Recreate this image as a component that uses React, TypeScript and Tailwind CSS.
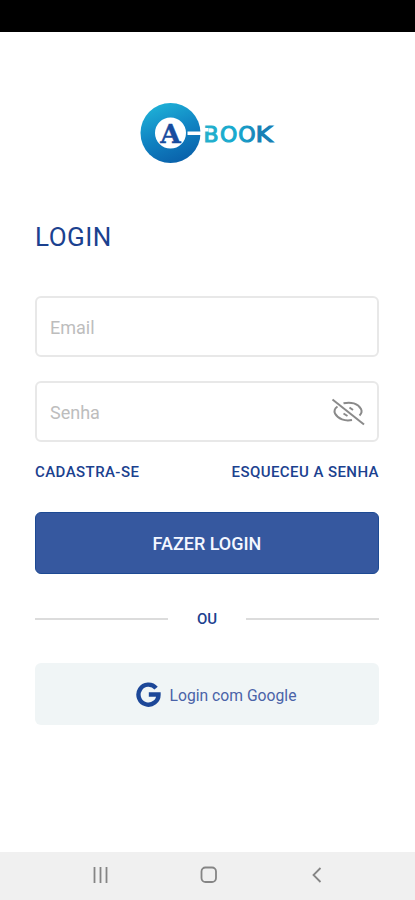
import { useState } from "react";

function Logo() {
  return (
    <svg width="136" height="62" viewBox="0 0 136 62" role="img" aria-label="A-Book" className="overflow-visible">
      <defs>
        <linearGradient id="ring" x1="0.2" y1="0" x2="0.6" y2="1">
          <stop offset="0" stopColor="#1fb4d8" />
          <stop offset="0.5" stopColor="#1186c4" />
          <stop offset="1" stopColor="#0a62ab" />
        </linearGradient>
        <linearGradient id="word" gradientUnits="userSpaceOnUse" x1="65" y1="0" x2="126" y2="0">
          <stop offset="0" stopColor="#22b0cc" />
          <stop offset="0.55" stopColor="#16a8ce" />
          <stop offset="1" stopColor="#1673ae" />
        </linearGradient>
      </defs>
      <circle cx="31.5" cy="31" r="30" fill="url(#ring)" />
      <circle cx="31.5" cy="31" r="15.5" fill="#fff" />
      <rect x="48.5" y="29.5" width="14" height="3.5" fill="#fff" />
      <text
        x="31.5"
        y="40.5"
        textAnchor="middle"
        fontFamily="'DejaVu Serif', serif"
        fontWeight="700"
        fontSize="26"
        textLength="20.5"
        lengthAdjust="spacingAndGlyphs"
        fill="#174c9f"
        stroke="#174c9f"
        strokeWidth="0.4"
      >
        A
      </text>
      <g fontFamily="'DejaVu Sans', sans-serif" fontSize="22" strokeWidth="1.1">
        <text x="64.5 81 99.2" y="40" fill="url(#word)" stroke="url(#word)">
          BOO
        </text>
        <text x="98" y="40" transform="scale(1.19 1)" fill="#1680b6" stroke="#1680b6">
          K
        </text>
      </g>
      {/* notch that opens the stem of the B */}
      <rect x="65" y="26" width="4.5" height="3.5" fill="#fff" />
    </svg>
  );
}

function EyeOff() {
  return (
    <svg width="34" height="28" viewBox="0 0 34 28" fill="none" stroke="#8a8a8a" strokeWidth="2">
      <path d="M1.5 1.5 33 26.5" />
      <path d="M12.5 5.3C20 3.5 27 5.5 30 11C31.3 13.5 30.5 15.5 28.5 17.5" />
      <path d="M6.5 8.5C3.5 10.5 3 13 4 15.5C7 21 14 23.5 21 22" />
      <path d="M18.5 9.5 22 12" />
      <path d="M12.5 15.5 16.5 18" />
    </svg>
  );
}

function GoogleMark() {
  return (
    <svg width="25" height="25" viewBox="0 0 24 24" fill="none" stroke="#1c4798" strokeWidth="4.2">
      <path d="M19.3 5.9A9.6 9.6 0 1 0 21.6 12H12.3" />
    </svg>
  );
}

export default function App() {
  const [showPassword, setShowPassword] = useState(false);

  return (
    <div className="flex h-[900px] w-[415px] flex-col bg-white font-['Roboto',sans-serif] text-[#1b418f]">
      <div className="h-8 shrink-0 bg-black" />

      <main className="flex flex-1 flex-col pr-9 pl-[35px]">
        <div className="flex justify-center pt-[70px]">
          <Logo />
        </div>

        <h1 className="mt-[57px] h-8 text-[26px] leading-8 tracking-[0.5px]">LOGIN</h1>

        <form className="mt-[43px]" onSubmit={(e) => e.preventDefault()}>
          <input
            type="email"
            placeholder="Email"
            className="block h-[61px] w-full rounded-md border-2 border-[#e8e8e8] px-[13px] pt-0.5 text-[18px] outline-none placeholder:text-[#bdbdbd]"
          />
          <div className="mt-6 flex h-[61px] items-center rounded-md border-2 border-[#e8e8e8] pr-3 pl-[13px]">
            <input
              type={showPassword ? "text" : "password"}
              placeholder="Senha"
              className="min-w-0 flex-1 pt-0.5 text-[18px] outline-none placeholder:text-[#bdbdbd]"
            />
            <button type="button" aria-label="Mostrar senha" onClick={() => setShowPassword(!showPassword)}>
              <EyeOff />
            </button>
          </div>

          <div className="mt-5 flex h-5 items-center justify-between text-[15px] font-medium tracking-[0.43px]">
            <a href="#">CADASTRA-SE</a>
            <a href="#">ESQUECEU A SENHA</a>
          </div>

          <button
            type="submit"
            className="mt-[30px] block h-[62px] w-full rounded-md border border-[#1d4a93] bg-[#36589f] text-[18px] font-medium text-[#f4f7ff]"
          >
            FAZER LOGIN
          </button>
        </form>

        <div className="mt-[35px] flex h-5 items-center justify-between">
          <span className="h-0.5 w-[133px] bg-[#dcdcdc]" />
          <span className="text-[15px] font-medium">OU</span>
          <span className="h-0.5 w-[133px] bg-[#dcdcdc]" />
        </div>

        <button
          type="button"
          className="mt-[34px] flex h-[62px] w-full items-center justify-center gap-[9px] rounded-md bg-[#f0f5f6] pl-[18px] text-[15.7px] text-[#4a63a8]"
        >
          <GoogleMark />
          <span className="pt-[3px]">Login com Google</span>
        </button>
      </main>

      <nav className="h-12 shrink-0 bg-[#f0f0f0]">
        <svg width="415" height="48" viewBox="0 0 415 48" fill="none" stroke="#858585" strokeWidth="1.8">
          <path d="M94.5 15v16M100.5 15v16M106.5 15v16" />
          <rect x="201.5" y="15.5" width="14.5" height="14.5" rx="4" />
          <path d="M320.5 16 313.5 23 320.5 30" />
        </svg>
      </nav>
    </div>
  );
}
